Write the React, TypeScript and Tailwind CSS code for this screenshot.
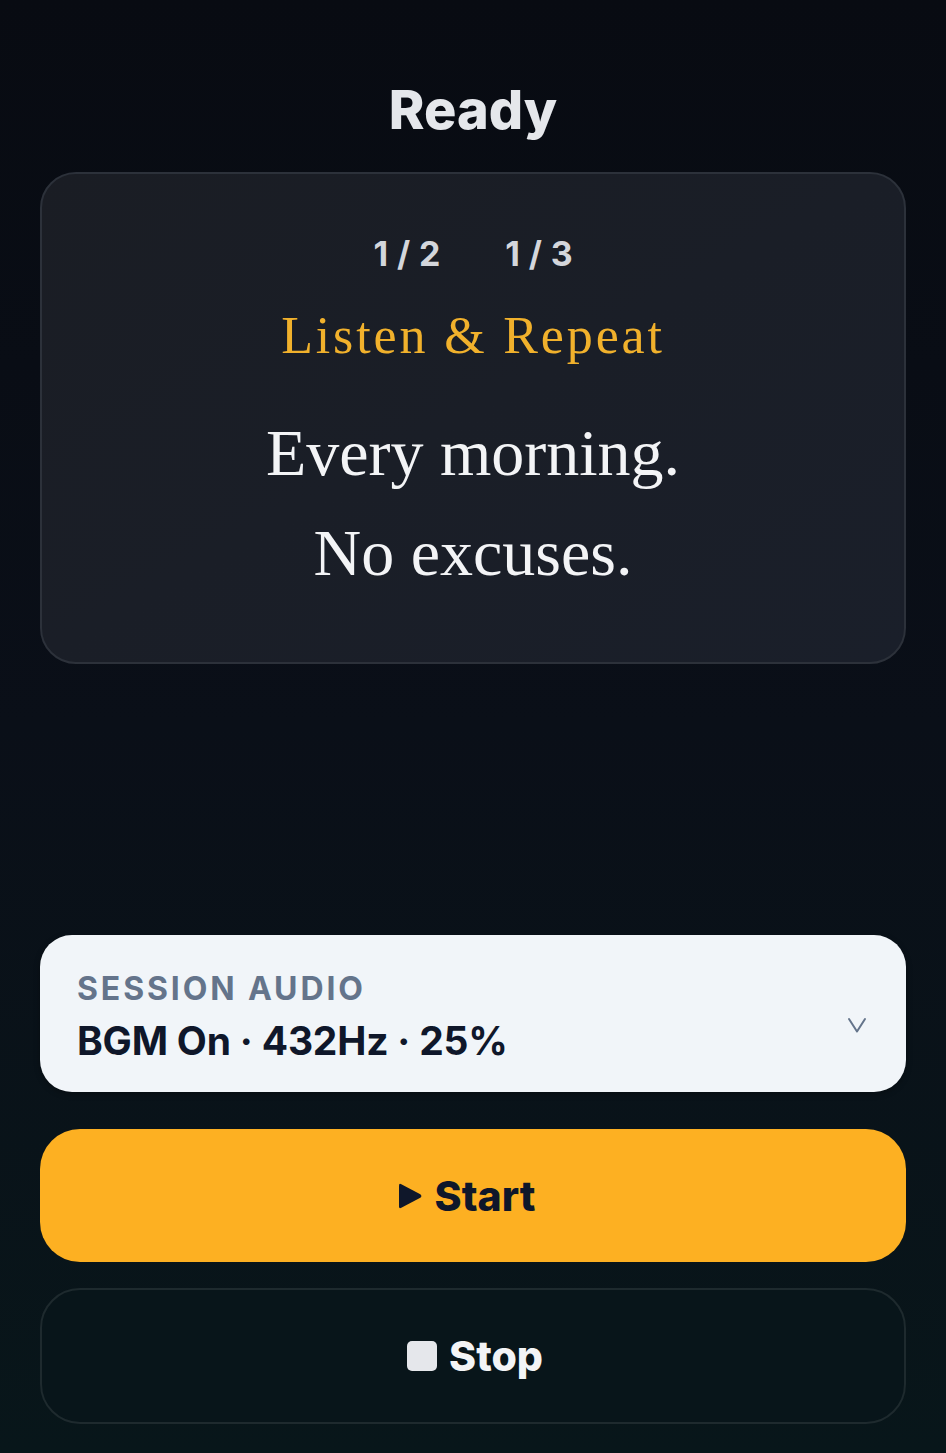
const sans = "font-['Inter',_'Roboto',_sans-serif]";
const serif = "font-['Liberation_Serif',_'DejaVu_Serif',_serif]";

function PhraseCard() {
  return (
    <div className="mt-[30px] h-[492px] rounded-[36px] border-2 border-[#2c313a] bg-gradient-to-br from-[#1a1d24] to-[#1a1f2a] flex flex-col items-center pt-[60px]">
      <div className={`${sans} flex gap-[56px] pl-[9px] text-[34px] leading-[40px] font-bold tracking-[0.26em] text-[#d4d6db]`}>
        <span>1/2</span>
        <span>1/3</span>
      </div>
      <p className={`${serif} mt-[32px] text-[52px] leading-[60px] tracking-[0.055em] text-[#f1b12c]`}>
        Listen &amp; Repeat
      </p>
      <div className={`${serif} mt-[37px] text-[66px] leading-[100px] text-[#f3f4f6] text-center`}>
        <p>Every morning.</p>
        <p>No excuses.</p>
      </div>
    </div>
  );
}

function AudioSelect() {
  return (
    <button className="w-full h-[157px] rounded-[32px] bg-[#f1f5f9] flex items-center justify-between pl-[37px] pr-[39px] text-left shadow-[0_2px_6px_rgba(0,0,0,0.3)]">
      <div className="flex flex-col pt-[6px]">
        <span className={`${sans} text-[32px] leading-[40px] font-bold tracking-[0.09em] text-[#64748b]`}>
          SESSION AUDIO
        </span>
        <span className={`${sans} mt-[8px] text-[39px] leading-[48px] font-bold tracking-[-0.005em] text-[#0f172a]`}>
          BGM On · 432Hz · 25%
        </span>
      </div>
      <svg width="20" height="17" viewBox="0 0 20 17" className="mt-[24px] text-[#64748b]">
        <path d="M2 2 L10 14.5 L18 2" fill="none" stroke="currentColor" strokeWidth="2" strokeLinecap="round" strokeLinejoin="round" />
      </svg>
    </button>
  );
}

export default function App() {
  return (
    <div className="min-h-screen h-[1453px] flex flex-col px-[40px] pb-[29px] bg-gradient-to-b from-[#080b12] via-[#0a0f18] to-[#08161a]">
      <h1 className={`${sans} pt-[78px] text-center text-[54px] leading-[64px] font-extrabold text-[#e5e7eb]`}>
        Ready
      </h1>
      <PhraseCard />
      <div className="flex-1" />
      <AudioSelect />
      <button className="mt-[37px] w-full h-[133px] rounded-[40px] bg-[#fdb022] flex items-center justify-center gap-[12px] pr-[14px]">
        <svg width="26" height="28" viewBox="0 0 26 28" className="text-[#0f172a]">
          <path d="M2 3.5 Q2 1 4.3 2.2 L23.3 12.2 Q25.5 14 23.3 15.8 L4.3 25.8 Q2 27 2 24.5 Z" fill="currentColor" />
        </svg>
        <span className={`${sans} text-[41px] leading-[48px] font-extrabold text-[#0f172a]`}>Start</span>
      </button>
      <button className="mt-[26px] w-full h-[136px] rounded-[40px] border-2 border-[#1e2a2e] bg-[#08151a] flex items-center justify-center gap-[12px] pl-[4px]">
        <span className="w-[30px] h-[30px] rounded-[5px] bg-[#e5e7eb]" />
        <span className={`${sans} text-[41px] leading-[48px] font-extrabold text-[#f3f4f6]`}>Stop</span>
      </button>
    </div>
  );
}
